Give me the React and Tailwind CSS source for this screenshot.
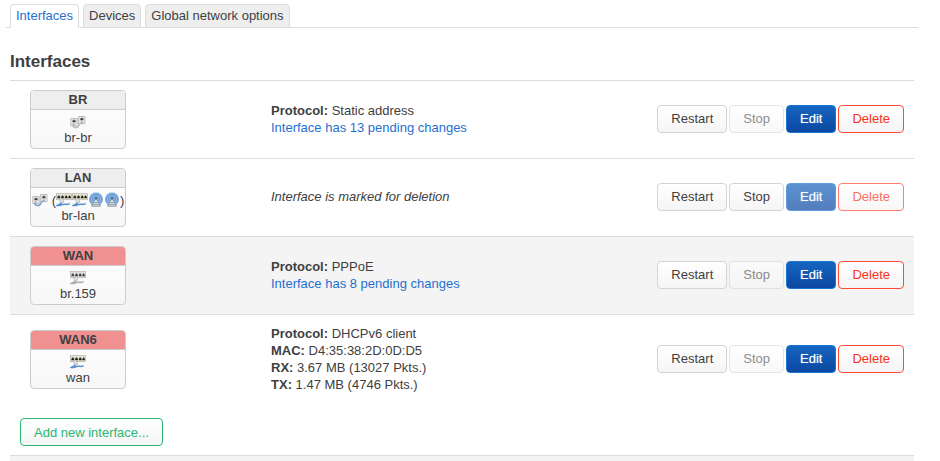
import React from "react";
import clsx from "clsx";

function BridgeIcon({ active }) {
  const cable = active ? "#7fa6d8" : "#bdbdbd";
  return (
    <svg viewBox="0 0 16 16" className="h-4 w-4 shrink-0" aria-hidden="true">
      <path d="M0.800 4.500h6.400v7.200H0.800z" fill="#e9e9e6" stroke="#b0b0b0" strokeWidth="0.800" />
      <path d="M8.600 2.500H15v7.200H8.600z" fill="#e9e9e6" stroke="#b0b0b0" strokeWidth="0.800" />
      <path d="M2.400 8.300V6.600h.9v-.9h1.500v.9h.9v1.700z" fill="#444" />
      <path d="M10.200 6.300V4.600h.9v-.9h1.500v.9h.9v1.700z" fill="#444" />
      <path d="M2.800 11.200c.4 3 5 3 5.800.6.600-2.200 1-2.400 3.400-2.900" fill="none" stroke={cable} strokeWidth="1.800" />
      <path d="M3.600 9.200v2.400M12 7.200v2" stroke="#a5a5a5" strokeWidth="1.600" />
    </svg>
  );
}

function PortsIcon({ active }) {
  const cable = active ? "#5f91d0" : "#adadad";
  return (
    <svg viewBox="0 0 16 16" className="h-4 w-4 shrink-0" aria-hidden="true">
      <rect x="0.400" y="1.500" width="15.200" height="6.200" fill={active ? "#e6e5d0" : "#e0e0e0"} stroke="#b5b5b0" strokeWidth="0.700" />
      <path
        d="M1.400 6.200V4.400h.7v-1h1.400v1h.7v1.800zM5.100 6.200V4.400h.7v-1h1.400v1h.7v1.800zM8.800 6.200V4.400h.7v-1h1.400v1h.7v1.800zM12.300 6.200V4.400h.7v-1h1.200v1h.7v1.800z"
        fill={active ? "#222" : "#444"}
      />
      <path d="M3.200 6.800h3.600l.8 3.400-2.600 1.200z" fill="#e2e2e2" stroke="#aaa" strokeWidth="0.700" />
      <path d="M5.600 10.800c-.6 1.500-3.600 1.600-4.600 2.700 3 .6 4.500-1 7-1.200 2.300 0 3 .5 5.600-.6" fill="none" stroke={cable} strokeWidth="1.500" />
    </svg>
  );
}

function WifiIcon() {
  return (
    <svg viewBox="0 0 16 16" className="h-4 w-4 shrink-0" aria-hidden="true">
      <circle cx="8" cy="7.200" r="7" fill="#9cc0e8" />
      <path d="M4 11.400a5.600 5.600 0 1 1 8 0M5.500 9.400a3.300 3.300 0 1 1 5 0" fill="none" stroke="#5e95d6" strokeWidth="1.100" />
      <path d="M8 5.600L3.600 14.200h8.800z" fill="#dce6f0" stroke="#8793a0" strokeWidth="1" />
      <path d="M6.300 10.400h3.400M5.200 12.400h5.600" stroke="#8793a0" strokeWidth="0.900" />
      <circle cx="8" cy="6.300" r="1.500" fill="#55718f" />
    </svg>
  );
}

const buttonStyles = {
  neutral: "border-[#d4d4d4] from-white to-[#f5f5f5] text-[#404040]",
  primary:
    "border-[#1976d2] from-[#1565c0] to-[#0d47a1] text-white [text-shadow:0_0_1px_#fff8]",
  danger: "border-[#ff4a36] from-white to-[#f5f5f5] text-[#fa3220]",
  add: "border-[#2bb673] from-white to-[#f5f5f5] text-[#2bb673]",
};

function Button({ kind = "neutral", disabled, children }) {
  return (
    <button
      type="button"
      disabled={disabled}
      className={clsx(
        "h-7 rounded-[4px] border bg-linear-to-b px-[13px] whitespace-nowrap",
        buttonStyles[kind],
        disabled && (kind === "neutral" ? "opacity-60" : "opacity-70")
      )}
    >
      {children}
    </button>
  );
}

function InterfaceBox({ name, device, down, children }) {
  return (
    <div className="ml-[10px] w-24 overflow-hidden rounded-[4px] border border-[#ccc] bg-linear-to-b from-white to-[#f7f7f7] text-center">
      <div
        className={clsx(
          "border-b border-[#ccc] leading-[18px] font-bold",
          down ? "bg-[#f09090]" : "bg-[#eee]"
        )}
      >
        {name}
      </div>
      <div className="pt-1 pb-[3px]">
        <div className="flex h-4 items-center justify-center">{children}</div>
        <div className="leading-[15px]">{device}</div>
      </div>
    </div>
  );
}

function Row({ box, stopDisabled = true, deleting, shaded, tall, children }) {
  const cell = "border-t border-[#ddd] px-[10px] align-middle";
  return (
    <tr className={clsx(shaded && "bg-[#f4f4f4]", tall && "h-[90px]")}>
      <td className={clsx(cell, "py-[9px]")}>{box}</td>
      <td className={clsx(cell, "pt-2 pb-[10px]")}>{children}</td>
      <td className={clsx(cell, "pt-2 pb-[10px]")}>
        <div className="flex justify-end gap-[2px]">
          <Button>Restart</Button>
          <Button disabled={stopDisabled}>Stop</Button>
          <Button kind="primary" disabled={deleting}>Edit</Button>
          <Button kind="danger" disabled={deleting}>Delete</Button>
        </div>
      </td>
    </tr>
  );
}

function Field({ label, value }) {
  return (
    <div>
      <strong>{label}:</strong> {value}
    </div>
  );
}

function Tab({ active, children }) {
  return (
    <li>
      <a
        href="#"
        className={clsx(
          "-mb-px block rounded-t-[4px] border border-[#ddd] px-[5px] leading-[22px]",
          active ? "border-b-white bg-white text-[#1f6fd0]" : "bg-[#eee] text-[#404040]"
        )}
      >
        {children}
      </a>
    </li>
  );
}

export default function App() {
  return (
    <main className="bg-white pt-1 pr-[22px] pl-[6px] font-['Liberation_Sans',Arial,sans-serif] text-[13px] leading-[17px] text-[#404040]">
      <nav>
        <ul className="flex gap-1 border-b border-[#ddd] pl-1">
          <Tab active>Interfaces</Tab>
          <Tab>Devices</Tab>
          <Tab>Global network options</Tab>
        </ul>
      </nav>
      <section className="mr-1 ml-1">
        <h3 className="pt-4 text-[17px] leading-9 font-bold">Interfaces</h3>
        <table className="w-full border-separate border-spacing-0 text-left">
          <colgroup>
            <col className="w-[251px]" />
            <col />
            <col className="w-[266px]" />
          </colgroup>
          <tbody>
            <Row box={<InterfaceBox name="BR" device="br-br"><BridgeIcon /></InterfaceBox>}>
              <Field label="Protocol" value="Static address" />
              <a href="#" className="text-[#1f6fd0]">Interface has 13 pending changes</a>
            </Row>
            <Row
              deleting
              stopDisabled={false}
              box={
                <InterfaceBox name="LAN" device="br-lan">
                  <BridgeIcon active />
                  <span className="ml-1">(</span>
                  <PortsIcon active />
                  <PortsIcon active />
                  <WifiIcon />
                  <WifiIcon />
                  <span>)</span>
                </InterfaceBox>
              }
            >
              <em>Interface is marked for deletion</em>
            </Row>
            <Row shaded box={<InterfaceBox name="WAN" device="br.159" down><PortsIcon /></InterfaceBox>}>
              <Field label="Protocol" value="PPPoE" />
              <a href="#" className="text-[#1f6fd0]">Interface has 8 pending changes</a>
            </Row>
            <Row tall box={<InterfaceBox name="WAN6" device="wan" down><PortsIcon active /></InterfaceBox>}>
              <Field label="Protocol" value="DHCPv6 client" />
              <Field label="MAC" value="D4:35:38:2D:0D:D5" />
              <Field label="RX" value="3.67 MB (13027 Pkts.)" />
              <Field label="TX" value="1.47 MB (4746 Pkts.)" />
            </Row>
          </tbody>
        </table>
        <div className="px-[10px] pt-[14px] pb-[9px]">
          <Button kind="add">Add new interface...</Button>
        </div>
        <footer className="h-[6px] border-t border-[#ddd] bg-[#f4f4f4]" />
      </section>
    </main>
  );
}
